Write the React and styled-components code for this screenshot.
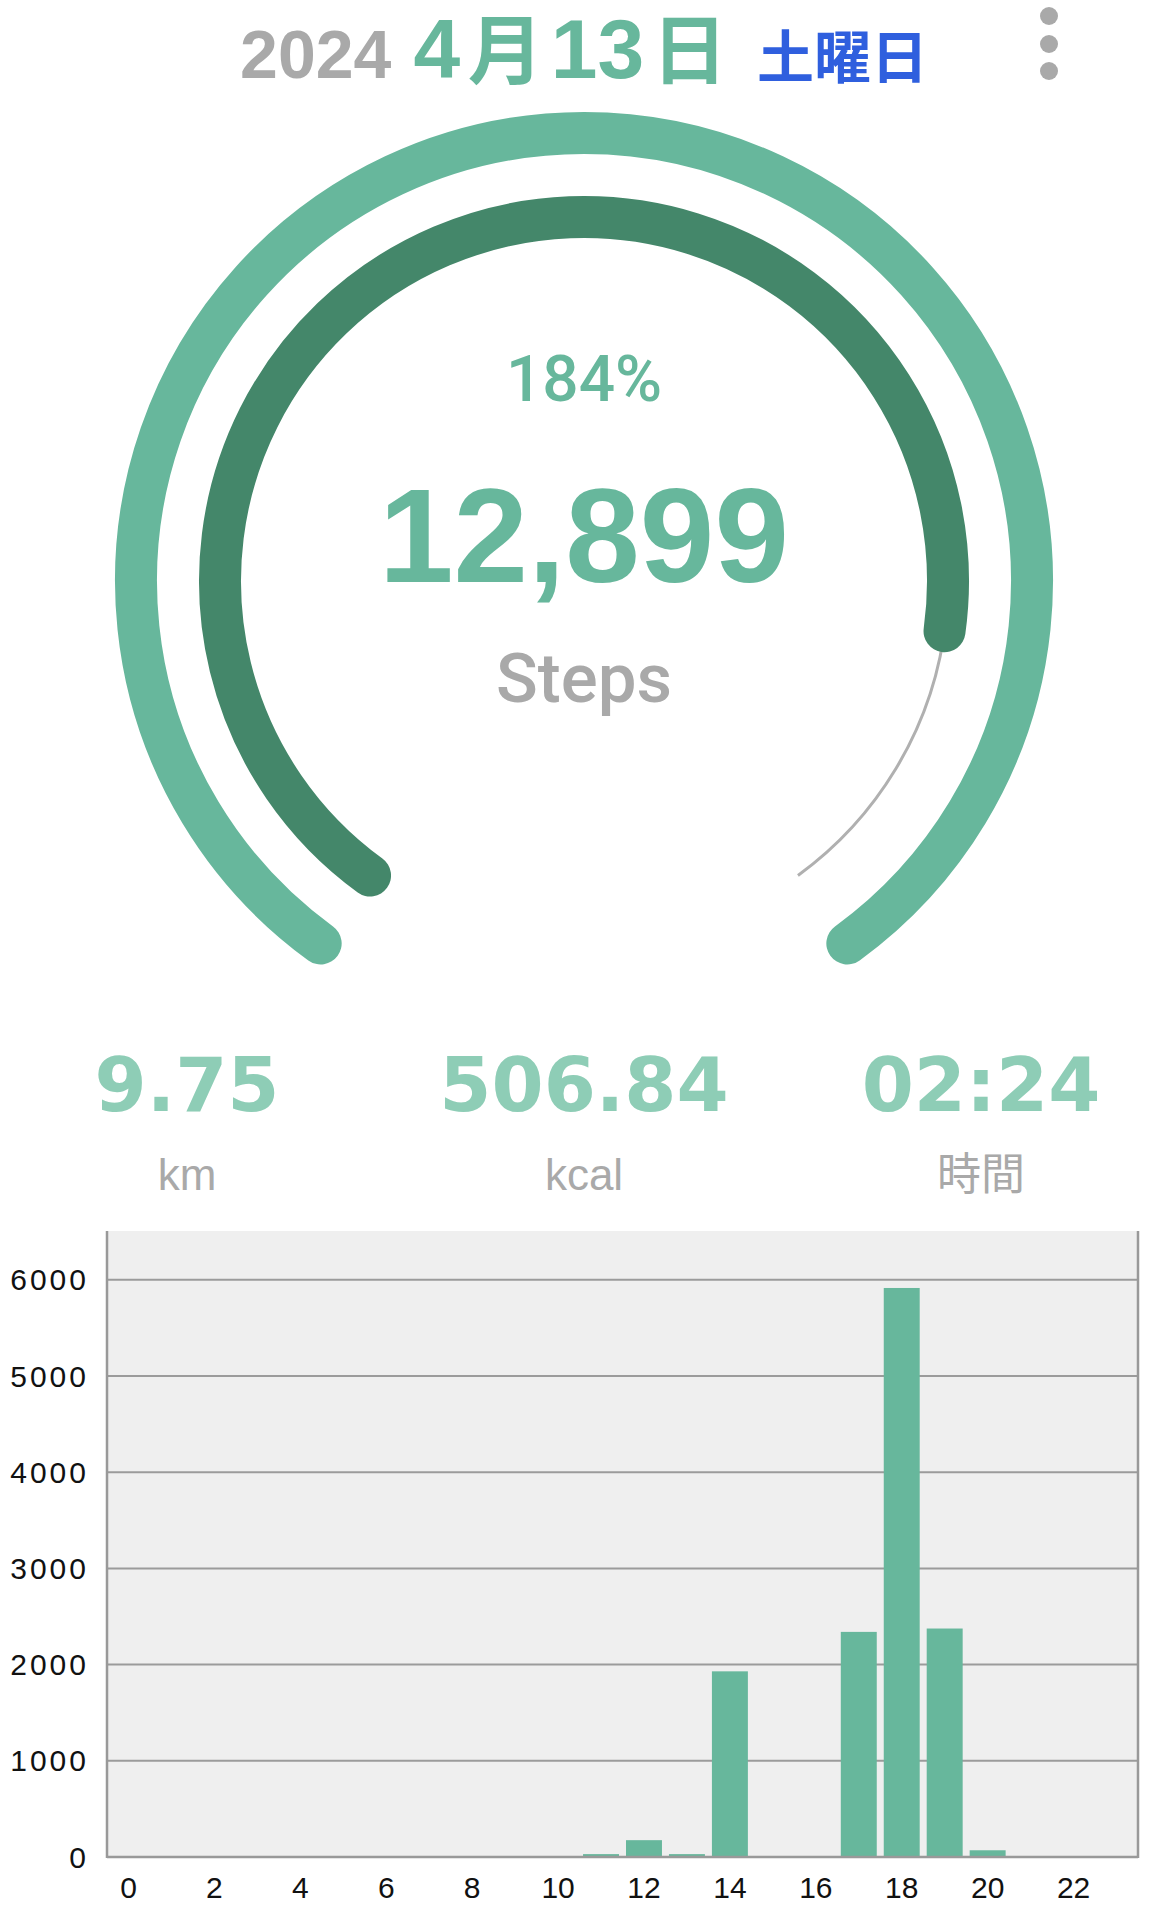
import React from 'react';
import styled, { createGlobalStyle } from 'styled-components';

const GlobalStyle = createGlobalStyle`
  html, body {
    margin: 0;
    padding: 0;
    background: #ffffff;
  }
  body {
    font-family: "Liberation Sans", Arial, "Noto Sans CJK JP", sans-serif;
  }
`;

const GREEN = '#67b79c';
const DARK_GREEN = '#44876a';
const GRAY = '#a9a9a9';

const Page = styled.div`
  width: 1168px;
  height: 1920px;
  overflow: hidden;
  display: flex;
  flex-direction: column;
`;

const Header = styled.header`
  height: 90px;
  flex: none;
  display: grid;
  grid-template-columns: 1fr auto 1fr;
  align-items: start;
`;

const Title = styled.h1`
  grid-column: 2;
  margin: 2px 0 0;
  display: flex;
  align-items: baseline;
  gap: 22px;
  font-weight: 700;
`;

const DatePart = styled.span`
  font-family: "Liberation Sans", Arial, "Noto Sans CJK JP", sans-serif;
  font-size: ${p => p.$size}px;
  line-height: 1.13;
  color: ${p => p.$color};
`;

const Kanji = styled.span`
  font-size: 0.9em;
  margin: 0 0.1em;
`;

const Kebab = styled.button`
  grid-column: 3;
  justify-self: start;
  margin: 7px 0 0 112px;
  padding: 0;
  border: 0;
  background: none;
  display: flex;
  flex-direction: column;
  gap: 9.5px;
`;

const Dot = styled.span`
  width: 18px;
  height: 18px;
  border-radius: 50%;
  background: ${GRAY};
`;

const Gauge = styled.section`
  position: relative;
  height: 930px;
  flex: none;
`;

const GaugeSvg = styled.svg`
  position: absolute;
  left: 0;
  top: 0;
`;

const GaugeText = styled.div`
  position: relative;
  padding-top: 258px;
  display: flex;
  flex-direction: column;
  align-items: center;
`;

const Percent = styled.div`
  font-family: Roboto, "Liberation Sans", sans-serif;
  font-weight: 500;
  font-size: 64px;
  line-height: 1;
  color: ${GREEN};
`;

const Count = styled.div`
  margin-top: 57px;
  font-weight: 700;
  font-size: 134px;
  line-height: 1;
  color: ${GREEN};
`;

const Unit = styled.div`
  margin-top: 41px;
  font-family: Roboto, "Liberation Sans", sans-serif;
  font-weight: 500;
  font-size: 69px;
  line-height: 1;
  color: ${GRAY};
`;

const Stats = styled.section`
  flex: none;
  padding-top: 28px;
  display: grid;
  grid-template-columns: repeat(3, 300px);
  column-gap: 97px;
  justify-content: center;
`;

const Stat = styled.div`
  display: flex;
  flex-direction: column;
  align-items: center;
`;

const StatValue = styled.div`
  font-family: "DejaVu Sans", "Liberation Sans", sans-serif;
  font-weight: 700;
  font-size: 75px;
  line-height: 1;
  color: #8ecdb6;
`;

const StatLabel = styled.div`
  margin-top: 30px;
  font-family: "Liberation Sans", Arial, "Noto Sans CJK JP", sans-serif;
  font-size: 44px;
  line-height: 1;
  color: ${GRAY};
`;

const Chart = styled.section`
  flex: none;
  margin-top: 23px;
  height: 700px;
`;

const pt = (cx, cy, r, deg) => {
  const a = (deg * Math.PI) / 180;
  return [cx + r * Math.sin(a), cy - r * Math.cos(a)];
};

const arc = (cx, cy, r, from, to) => {
  const [x1, y1] = pt(cx, cy, r, from);
  const [x2, y2] = pt(cx, cy, r, to);
  const large = to - from > 180 ? 1 : 0;
  return `M ${x1} ${y1} A ${r} ${r} 0 ${large} 1 ${x2} ${y2}`;
};

const CX = 584;
const CY = 491;
const SPAN = 144;

function GaugeRings({ percent }) {
  const inner = (percent % 100) / 100;
  const end = -SPAN + inner * SPAN * 2;
  return (
    <GaugeSvg width="1168" height="930" viewBox="0 0 1168 930">
      <path d={arc(CX, CY, 448, -SPAN, SPAN)} fill="none" stroke={GREEN} strokeWidth="42" strokeLinecap="round" />
      <path d={arc(CX, CY, 364, -SPAN, SPAN)} fill="none" stroke="#b0b0b0" strokeWidth="3" />
      <path d={arc(CX, CY, 364, -SPAN, end)} fill="none" stroke={DARK_GREEN} strokeWidth="42" strokeLinecap="round" />
    </GaugeSvg>
  );
}

const hourly = { 11: 30, 12: 175, 13: 30, 14: 1930, 17: 2340, 18: 5915, 19: 2375, 20: 70 };

const PLOT_L = 107;
const PLOT_R = 1138;
const PLOT_T = 11;
const ZERO = 637;
const yFor = v => ZERO - v * 0.0962;
const SLOT = (PLOT_R - PLOT_L) / 24;

function StepChart() {
  const ticks = [0, 1000, 2000, 3000, 4000, 5000, 6000];
  const hours = Array.from({ length: 24 }, (_, i) => i);
  return (
    <svg width="1168" height="700" viewBox="0 0 1168 700">
      <rect x={PLOT_L} y={PLOT_T} width={PLOT_R - PLOT_L} height={ZERO - PLOT_T} fill="#efefef" />
      {ticks.slice(1).map(t => (
        <line key={t} x1={PLOT_L} x2={PLOT_R} y1={yFor(t)} y2={yFor(t)} stroke="#9b9b9b" strokeWidth="2" />
      ))}
      {hours.map(h => hourly[h] ? (
        <rect
          key={h}
          x={PLOT_L + h * SLOT + 3.5}
          y={yFor(hourly[h])}
          width={SLOT - 7}
          height={ZERO - yFor(hourly[h])}
          fill={GREEN}
        />
      ) : null)}
      <line x1={PLOT_L} x2={PLOT_L} y1={PLOT_T} y2={ZERO + 1} stroke="#999" strokeWidth="2.5" />
      <line x1={PLOT_R} x2={PLOT_R} y1={PLOT_T} y2={ZERO + 1} stroke="#999" strokeWidth="2.5" />
      <line x1={PLOT_L} x2={PLOT_R} y1={ZERO} y2={ZERO} stroke="#999" strokeWidth="2.5" />
      {ticks.map(t => (
        <text
          key={t}
          x="89"
          y={yFor(t) + 10.5}
          textAnchor="end"
          fontFamily='"Liberation Sans", Arial, sans-serif'
          fontSize="30"
          letterSpacing="3"
          fill="#111"
        >
          {t}
        </text>
      ))}
      {hours.filter(h => h % 2 === 0).map(h => (
        <text
          key={h}
          x={PLOT_L + (h + 0.5) * SLOT}
          y="678"
          textAnchor="middle"
          fontFamily='"Liberation Sans", Arial, sans-serif'
          fontSize="30"
          fill="#111"
        >
          {h}
        </text>
      ))}
    </svg>
  );
}

const stats = [
  { value: '9.75', label: 'km' },
  { value: '506.84', label: 'kcal' },
  { value: '02:24', label: '時間' },
];

export default function App() {
  return (
    <Page>
      <GlobalStyle />
      <Header>
        <Title>
          <DatePart $size={68} $color={GRAY}>2024</DatePart>
          <DatePart $size={84} $color={GREEN}>
            4<Kanji>月</Kanji>13<Kanji>日</Kanji>
          </DatePart>
          <DatePart $size={57} $color="#2f5fde">土曜日</DatePart>
        </Title>
        <Kebab aria-label="menu">
          <Dot />
          <Dot />
          <Dot />
        </Kebab>
      </Header>

      <Gauge>
        <GaugeRings percent={184} />
        <GaugeText>
          <Percent>184%</Percent>
          <Count>12,899</Count>
          <Unit>Steps</Unit>
        </GaugeText>
      </Gauge>

      <Stats>
        {stats.map(s => (
          <Stat key={s.label}>
            <StatValue>{s.value}</StatValue>
            <StatLabel>{s.label}</StatLabel>
          </Stat>
        ))}
      </Stats>

      <Chart>
        <StepChart />
      </Chart>
    </Page>
  );
}
